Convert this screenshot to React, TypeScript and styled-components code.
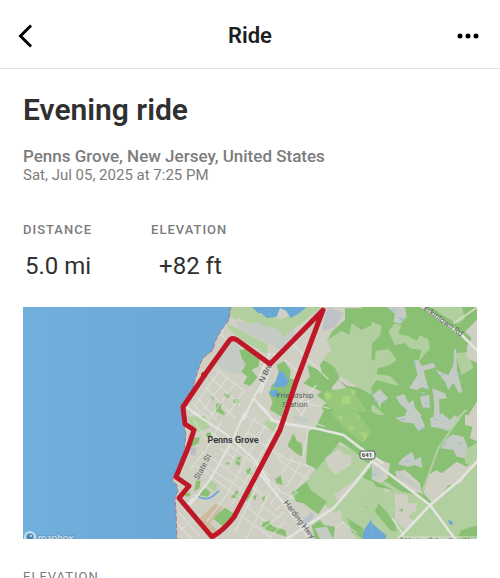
import React from "react";
import styled, { createGlobalStyle } from "styled-components";

const GlobalStyle = createGlobalStyle`
  *, *::before, *::after { box-sizing: border-box; }
  body {
    margin: 0;
    background: #fff;
    color: #303030;
    font-family: Roboto, "Liberation Sans", sans-serif;
  }
`;

const Header = styled.header`
  display: grid;
  grid-template-columns: 52px 1fr 52px;
  align-items: center;
  height: 69px;
  padding-top: 3px;
  border-bottom: 1px solid #e4e4e4;
`;

const HeaderTitle = styled.h1`
  margin: 0;
  font-size: 22px;
  line-height: 28px;
  font-weight: 600;
  text-align: center;
  color: #1e1e1e;
`;

const IconButton = styled.button<{ $align: "start" | "end" }>`
  display: flex;
  justify-content: ${(p) => p.$align};
  align-items: center;
  height: 44px;
  padding: 0 ${(p) => (p.$align === "start" ? 18 : 21)}px;
  border: 0;
  background: none;
  color: #000;
  cursor: pointer;

  svg { display: block; flex: none; }
`;

const Content = styled.main`
  padding: 21px 23px 0;
`;

const RideName = styled.h2`
  margin: 0;
  font-size: 30px;
  line-height: 40px;
  font-weight: 600;
`;

const Place = styled.p`
  margin: 16px 0 0;
  font-size: 17px;
  line-height: 20px;
  font-weight: 500;
  color: #7c7c7c;
`;

const When = styled.p`
  margin: 0;
  font-size: 15px;
  line-height: 18px;
  font-weight: 400;
  color: #7c7c7c;
`;

const Stats = styled.dl`
  display: flex;
  gap: 59px;
  margin: 36px 0 0;
`;

const Label = styled.dt`
  font-size: 13px;
  line-height: 20px;
  font-weight: 500;
  letter-spacing: 1px;
  color: #7c7c7c;
`;

const Value = styled.dd<{ $indent: number }>`
  margin: 10px 0 0;
  padding-left: ${(p) => p.$indent}px;
  font-size: 24px;
  line-height: 32px;
  font-weight: 400;
`;

const MapFrame = styled.figure`
  margin: 25px 0 0;

  svg { display: block; width: 100%; height: auto; }
`;

const SectionTitle = styled.h3`
  margin: 28px 0 0;
  font-size: 13px;
  line-height: 20px;
  font-weight: 400;
  letter-spacing: 1px;
  color: #7c7c7c;
`;

const WATER = "#6ba8d7";
const LAND = "#cfd0c3";
const GREEN = "#89c074";
const PALE = "#b1cf9f";
const MARSH = "#c3cbc4";
const ROAD = "#e3e4df";
const ROUTE = "#c01728";

const COAST =
  "M231 306 229 320 220 332 215 342 213 350 203 358 199 367 195 380 193 388 187 397 181 405 183 411 184 424 186 435 184 452 180 465 175 475 172 480 177 485 178 492 175 498 176 512 177 540";

function NorthShore() {
  return (
    <g transform="translate(160 300) scale(.3333)">
      <path fill={PALE} d="M213 20H330V75L300 66 262 72 240 55 225 60 210 40ZM200 70 250 95 290 115 322 132 322 158 270 135 235 112 210 90Z" />
      <path fill={MARSH} d="M225 62 262 72 300 66 330 75V130L290 110 240 88ZM190 125 220 118 245 150 240 175 262 200 240 222 200 215 165 190 175 150Z" />
      <path fill={WATER} d="M275 20H340V55L322 52 310 36 295 40Z" />
      <path fill={GREEN} d="M238 150 255 148 265 135 275 155 300 170 295 200 275 210 292 232 270 258 250 250 262 230 245 215 258 195 245 175ZM152 292 162 286 160 302 154 300ZM192 282 212 280 208 292 196 294ZM218 298 238 298 234 312 222 308ZM168 312 186 308 182 325 196 340 190 346 168 334Z" />
      <path fill="none" stroke={ROAD} strokeWidth="4" opacity=".6" d="M204 60 182 105 200 118M170 210 250 270M155 235 240 315M135 260 225 355M110 290 170 360M95 310 150 360M180 210 105 318M205 228 130 330M230 245 150 352M255 268 200 350" />
      <path fill="none" stroke={ROAD} strokeWidth="6" d="M330 160 300 225 310 245 280 295 250 360M78 320 130 355M280 295 330 345" />
    </g>
  );
}

function Station() {
  return (
    <g transform="translate(260 300) scale(.3333)">
      <path fill={MARSH} d="M0 55 60 60 110 95 60 150 0 110Z" />
      <path fill={PALE} d="M0 45 65 58 140 20H188L70 110 50 85 0 75ZM0 130 22 142 20 162 0 152Z" />
      <path fill={WATER} d="M0 20H140L120 38 92 55 78 32 60 24 50 50 20 54 0 36Z" />
      <path fill={GREEN} d="M250 20H335V365H190L200 345 182 320 200 310 170 285 185 275 130 250 150 230 142 195 165 205 185 215 180 195 190 180 230 200 240 225 235 240 262 258 290 262 335 250V20Z" />
      <path fill={PALE} d="M258 70 300 50 335 100V285L290 260 270 245 235 225 225 205 190 175 215 150 200 120 225 95Z" />
      <path fill={GREEN} d="M255 25H335V75L305 90 275 70 268 105 245 92 205 118 215 95 255 60ZM28 285 35 255 62 235 50 195 72 184 92 210 90 235 105 240 100 290 75 310 65 350 30 330 38 305Z" />
      <path fill="#bfc2c6" d="M198 35 210 22 250 40 225 82 185 95Z" />
      <path fill={WATER} d="M58 212 72 218 88 245 75 260 40 262ZM25 275 50 268 60 285 40 292Z" />
      <path fill={LAND} d="M215 262 235 240 260 265 250 285 225 290ZM120 325 160 320 200 345 150 350Z" />
      <path fill="#97c87c" d="M192 275 270 262 320 330 300 362 260 362 225 335 190 300Z" />
      <path fill="#a9d37d" d="M205 275 220 290 200 300 192 285ZM245 290 270 285 272 308 245 315ZM272 265 288 275 278 290ZM222 342 252 350 242 362 218 355Z" />
      <path fill="none" stroke={ROAD} strokeWidth="4" opacity=".7" d="M95 130 205 238M75 180 125 225M150 75 95 130 120 105M170 255 105 320 130 350M135 310 210 325M150 295 118 358" />
      <path fill="none" stroke={ROAD} strokeWidth="6" d="M-5 315 45 365M45 160 25 225 0 280" />
    </g>
  );
}

function Woods() {
  return (
    <g transform="translate(365 300) scale(.3333)">
      <path fill={GREEN} d="M-10 20H340V370H-10Z" />
      <path fill={PALE} d="M-10 75 15 62 50 78 45 105 20 132-10 125ZM70 95 88 70 110 75 100 102 130 108 155 122 165 105 190 118 195 145 160 185 170 150 135 145 120 130 90 135ZM32 152 72 148 95 180 75 195 38 205 35 222 75 228 105 258 70 250 35 240 20 260 0 250-10 180 30 180ZM195 20H290L300 55 278 72 248 55ZM270 160 310 155 325 205 290 225ZM-10 310 25 315 60 345 40 345 10 330-10 340ZM10 260 20 268 8 274Z" />
      <path fill={MARSH} d="M65 20H120L125 50 105 72 85 65 90 42ZM147 182 160 180 170 198 205 188 212 202 176 212 186 250 192 270 172 262 155 270 132 265 158 225ZM268 145 274 150 276 210 292 275 282 280 265 248 250 270 240 245 212 210 250 225 265 195ZM22 285 45 268 70 295 48 310 45 328 38 310ZM92 290 118 282 130 310 145 300 150 325 170 345 165 362 145 362 120 345 125 330 105 312ZM165 290 192 285 195 325 172 322ZM202 265 215 270 240 280 246 295 222 298 225 350 205 370 208 310Z" />
      <path fill={LAND} d="M340 55 300 95 320 115 305 140 308 175 340 190ZM340 298 295 370H340ZM160 20H185L192 32Z" />
      <path fill="none" stroke="#d8dcc9" strokeWidth="5" d="M265 70 340 20" />
      <path fill="none" stroke={PALE} strokeWidth="6" d="M305 330 260 370" />
      <path fill="none" stroke={ROAD} strokeWidth="8" d="M170 18 290 105 345 160" />
      <path fill="#9ec2d4" d="M72 25 92 28 88 35ZM98 50 118 55 110 64ZM145 184 158 190 150 195ZM165 275 182 278 175 283ZM275 218 288 222 278 228ZM26 298 38 300 32 306ZM225 222 240 222 232 229ZM178 308 190 310 184 316ZM92 352 105 354 98 360Z" />
    </g>
  );
}

function Town() {
  return (
    <g transform="translate(160 415) scale(.3333)">
      <path fill={PALE} d="M82 5 135 2 148 38 115 52 90 25ZM148 192 175 210 165 230 140 212Z" />
      <path fill={GREEN} d="M92 65 120 68 115 85 90 98ZM140 55 155 50 152 68 138 65ZM108 198 122 196 118 220 102 230ZM72 238 90 232 92 242 78 246ZM122 228 138 220 152 232 140 250 118 245ZM226 130 242 124 240 152 228 148ZM196 145 210 142 208 152ZM258 165 272 158 275 178 262 178ZM212 248 230 226 238 230 232 250ZM265 215 280 208 272 240 260 262 258 240ZM278 245 290 238 286 258ZM195 278 225 298 215 310 190 335 158 310ZM310 320 330 318V345L305 335ZM220 78 235 80 232 90Z" />
      <path fill="#cdbba1" d="M118 310 168 265 188 278 150 325 172 345 155 360Z" />
      <path fill="#b9bdc3" d="M92 98 110 96 105 122 92 118Z" />
      <path fill="none" stroke={ROAD} strokeWidth="4" opacity=".6" d="M150 50 330 180M120 105 310 240M100 145 275 275M185 20 140 100 90 165M330 10 270 110 200 240 140 320M290 0 200 165M330 70 215 270M100 15 140 75M135 150 240 220M260 50 300 75M255 0 330 45M55 290 120 365M50 325 95 372M60 345 120 300M100 240 160 250M240 300 330 365M260 275 330 330M330 230 260 370M290 215 225 350M180 100 240 140" />
      <path fill="none" stroke={ROAD} strokeWidth="6" d="M95-10 195 55 280 130 340 215M255-10 215 80 150 195 90 270M75 275 100 250" />
      <path fill="none" stroke={WATER} strokeWidth="5" d="M115 245C140 258 155 250 177 227" />
    </g>
  );
}

function Farmland() {
  return (
    <g transform="translate(260 415) scale(.3333)">
      <path fill={PALE} d="M10 25 30 12 50 30 40 55ZM225 85 335 130V250L315 275 335 290V372H290L235 300 175 255 120 225 165 165Z" />
      <path fill={GREEN} d="M190-10 165 40 145 48 138 145 168 165 240 80 285 110 335 155V-10ZM82 92 100 55 112 80 125 85 128 125 108 115ZM95 232 140 200 152 225 200 260 190 275 175 298 130 265 108 260ZM5 330 22 318 40 335 75 345 80 365 20 345ZM155 332 180 315 192 330 225 335 220 372H165ZM262 310 310 340V372L275 350ZM45 192 62 182 68 210 50 205ZM5 248 15 242 12 260ZM335 155V200L305 185Z" />
      <path fill={LAND} d="M195 130 238 100 250 118 275 122 272 150 225 180 205 155ZM222 240 270 205 325 165 240 265ZM220 295 240 285 250 310 232 312Z" />
      <path fill="#97c87c" d="M210-10H290L335 50 310 85 250 40Z" />
      <path fill="#a9d37d" d="M230 0 250 5 245 22ZM262 30 285 40 275 50ZM300 50 325 55 315 80ZM285 8 298 0 295 12Z" />
      <path fill={MARSH} d="M100 0 145 8 145 25 105 20ZM165 340 200 335 220 372H180Z" />
      <path fill="#bcbfcb" d="M125 320 155 290 162 305 138 332Z" />
      <path fill={WATER} d="M335 312 312 345 306 372H335Z" />
      <path fill="none" stroke={ROAD} strokeWidth="4" opacity=".6" d="M15 85 75 130 165 160M145 45 128 130M100 125 65 175M125 140 80 215M150 165 100 235M20 90 60 20M50 130 145 195M0 80 65 130M5 180 60 225 30 270M40 220 105 250M45 285 115 230M0 270 60 310M10 340 75 290M75 320 25 372M165 25 195 35M245 320 290 355M225 340 250 320" />
      <path fill="none" stroke={ROAD} strokeWidth="8" d="M30 15 90 28 175 42 250 60 300 98 370 145M335 140 280 210 220 280 150 325 80 372" />
      <path fill="none" stroke={ROAD} strokeWidth="7" d="M-5 170 75 270 150 372" />
    </g>
  );
}

function Crossroads() {
  return (
    <g transform="translate(365 415) scale(.3333)">
      <path fill={GREEN} d="M-10 18H340V380H-10Z" />
      <path fill={PALE} d="M-10 165 70 205 110 230 160 240 195 268 340 130V372H-10V320L20 320 0 260ZM300 105 340 80V160L300 145Z" />
      <path fill={LAND} d="M0 150 25 130 75 145 68 190 45 205 0 190ZM90 170 120 165 165 205 170 235 140 230 105 200ZM190 180 215 165 230 175 275 140 305 155 320 145 290 205 250 210 225 245 200 262 175 235ZM55 210 75 225 60 235ZM90 235 130 240 128 265 155 265 155 285 130 305 148 320 120 345 90 315ZM300 0H340V80L315 70 322 35 300 30Z" />
      <path fill={MARSH} d="M92 8 130 0 170 10 180 35 160 48 145 25 112 22ZM195 10 232-5 255 15 270 0 285 15 250 48 225 40 198 35ZM98 148 112 130 142 110 150 135 168 125 172 158 148 150 130 155ZM242 75 262 58 295 65 308 95 300 130 275 125 265 105 228 100ZM95 165 172 222 160 225 92 185ZM0 160 40 150 55 180 35 195 0 190Z" />
      <path fill={GREEN} d="M40 265 65 290 88 325 95 350 75 345 30 290ZM15 190 85 225 35 215ZM290 345 340 330V372H275ZM100 285 115 280 112 290Z" />
      <path fill={WATER} d="M-10 330 15 320 65 362 60 378H-10ZM250 315 263 320 262 332 252 325Z" />
      <path fill="#9ec2d4" d="M105 12 122 10 115 18ZM165 38 178 40 170 46ZM232 85 245 82 240 92ZM120 135 138 136 128 141ZM278 80 292 85 285 90ZM20 175 35 177 28 184ZM205 10 220 12 212 18Z" />
      <path fill="none" stroke={PALE} strokeWidth="6" d="M300-15 220 100 168 240" />
      <path fill="none" stroke={ROAD} strokeWidth="8" d="M0 165 22 138 195 270 270 372M345 130 285 195 195 270 100 372" />
      <path fill="none" stroke={ROAD} strokeWidth="4" d="M82 310 115 358" />
    </g>
  );
}

function RouteMap() {
  return (
    <svg viewBox="23 307 454 232" role="img" aria-label="Map of the ride around Penns Grove">
      <defs>
        <linearGradient id="river">
          <stop offset="0" stopColor="#71afdc" />
          <stop offset=".3" stopColor="#6ca9d7" />
        </linearGradient>
        <clipPath id="land"><path d={`${COAST}H478V306Z`} /></clipPath>
        <clipPath id="west"><path d="M160 300H370V420H270V540H160Z" /></clipPath>
      </defs>
      <path fill="url(#river)" d="M23 307H477V539H23Z" />
      <g clipPath="url(#land)">
        <path fill={LAND} d="M165 307H477V539H165Z" />
        <NorthShore />
        <Woods />
        <Station />
        <g clipPath="url(#west)"><Town /></g>
        <Crossroads />
        <Farmland />
      </g>
      <path fill="none" stroke="#b57587" strokeWidth="1" strokeDasharray="5 2" d={COAST} />

      <g fontFamily="Roboto, sans-serif" fill="#5c6062" textAnchor="middle">
        <text fontSize="8" transform="translate(268 374) rotate(-64)">N Bro</text>
        <text fontSize="8" x="295" y="398">Friendship</text>
        <text fontSize="8" x="295" y="407">Station</text>
        <text fontSize="8" transform="translate(205 468) rotate(-62)">State St</text>
        <text fontSize="8" transform="translate(297 521) rotate(53)">Harding Hwy</text>
        <text fontSize="8" transform="translate(442 323) rotate(36)">erkintown Rd</text>
        <text fontSize="9" fontWeight="600" fill="#303336" x="233" y="443">Penns Grove</text>
      </g>

      <path
        fill="none"
        stroke={ROUTE}
        strokeWidth="5"
        strokeLinejoin="round"
        strokeLinecap="round"
        d="M323 310 270 364 237 340Q232 337 229 341L206 373 183 407 185 424 194 430 188 448 176 477 189 486 179 498 212 537Q224 530 234 517L260 468 280 430 296 382Z"
      />
      <circle cx="204" cy="375" r="3" fill={ROUTE} />

      <rect x="360" y="451" width="15" height="8" rx="2" fill="#eceee9" stroke="#53585a" />
      <text x="367" y="457" fontFamily="Roboto, sans-serif" fontSize="6" fontWeight="700" textAnchor="middle" fill="#44494b">641</text>

      <g opacity=".75">
        <circle cx="30" cy="537" r="5" fill="none" stroke="#e5eff5" strokeWidth="2" />
        <circle cx="30" cy="537" r="3" fill="#47779d" />
        <circle cx="31" cy="536" r="1" fill="#fff" />
        <text x="38" y="541" fontFamily="Lato, sans-serif" fontSize="10" fontWeight="700" fill="#e5eff5" stroke="#557d9b" strokeWidth="1" paintOrder="stroke">mapbox</text>
      </g>
      <path fill="#dce0d5" opacity=".45" d="M398 536H477V539H398Z" />
      <text x="399" y="542" fontFamily="Roboto, sans-serif" fontSize="6" fill="#4f5950">© Mapbox © OpenStreetMap</text>
    </svg>
  );
}

const stats = [
  { label: "DISTANCE", value: "5.0 mi", indent: 2 },
  { label: "ELEVATION", value: "+82 ft", indent: 8 },
];

export default function App() {
  return (
    <>
      <GlobalStyle />
      <Header>
        <IconButton type="button" aria-label="Back" $align="start">
          <svg width="15" height="24" viewBox="0 0 15 24" fill="none" stroke="currentColor" strokeWidth="3">
            <path d="M13 1.5 2.5 12 13 22.5" />
          </svg>
        </IconButton>
        <HeaderTitle>Ride</HeaderTitle>
        <IconButton type="button" aria-label="More options" $align="end">
          <svg width="22" height="6" viewBox="0 0 22 6" fill="currentColor">
            <circle cx="3" cy="3" r="2.5" />
            <circle cx="11" cy="3" r="2.5" />
            <circle cx="19" cy="3" r="2.5" />
          </svg>
        </IconButton>
      </Header>
      <Content>
        <RideName>Evening ride</RideName>
        <Place>Penns Grove, New Jersey, United States</Place>
        <When>Sat, Jul 05, 2025 at 7:25 PM</When>
        <Stats>
          {stats.map((s) => (
            <div key={s.label}>
              <Label>{s.label}</Label>
              <Value $indent={s.indent}>{s.value}</Value>
            </div>
          ))}
        </Stats>
        <MapFrame>
          <RouteMap />
        </MapFrame>
        <SectionTitle>ELEVATION</SectionTitle>
      </Content>
    </>
  );
}
